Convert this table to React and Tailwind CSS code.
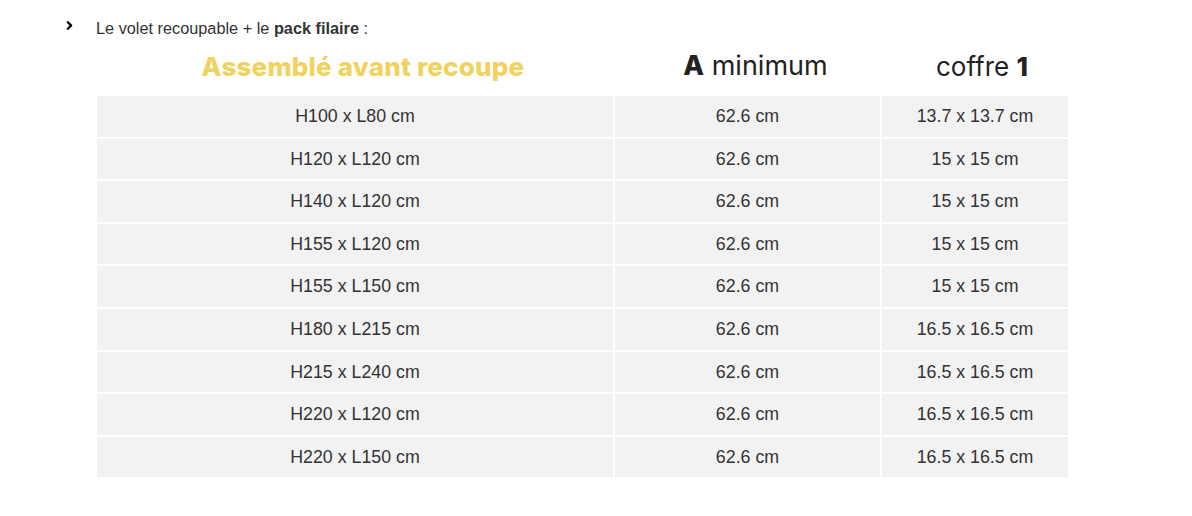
import { ChevronRight } from 'lucide-react';

const rows = [
  ['H100 x L80 cm', '62.6 cm', '13.7 x 13.7 cm'],
  ['H120 x L120 cm', '62.6 cm', '15 x 15 cm'],
  ['H140 x L120 cm', '62.6 cm', '15 x 15 cm'],
  ['H155 x L120 cm', '62.6 cm', '15 x 15 cm'],
  ['H155 x L150 cm', '62.6 cm', '15 x 15 cm'],
  ['H180 x L215 cm', '62.6 cm', '16.5 x 16.5 cm'],
  ['H215 x L240 cm', '62.6 cm', '16.5 x 16.5 cm'],
  ['H220 x L120 cm', '62.6 cm', '16.5 x 16.5 cm'],
  ['H220 x L150 cm', '62.6 cm', '16.5 x 16.5 cm'],
];

export default function App() {
  return (
    <div className="w-[1192px] h-[516px] bg-white text-[#333] font-['Liberation_Sans',Arial,sans-serif]">
      <div className="pt-[18px] pl-[63px] flex items-center gap-[20px] text-[16.3px] leading-[20px]">
        <ChevronRight className="w-[13px] h-[13px] text-[#000] -mt-[5px]" strokeWidth={4.5} />
        <span>
          Le volet recoupable + le <b className="font-bold">pack filaire</b> :
        </span>
      </div>

      <div className="pl-[97px]">
        <div className="grid grid-cols-[516px_265px_186px] gap-x-[2px] font-['Inter',sans-serif] text-[26px] h-[58px] items-center pb-[2px]">
          <div className="text-center pl-[16px] font-extrabold text-[#f0d35e] tracking-[0.2px]">Assemblé avant recoupe</div>
          <div className="text-center pl-[16px] text-[#222] text-[27px]">
            <span className="font-extrabold">A</span> minimum
          </div>
          <div className="text-center pl-[14px] text-[#222]">
            coffre <span className="font-extrabold">1</span>
          </div>
        </div>

        <div className="grid grid-cols-[516px_265px_186px] gap-x-[2px] gap-y-[2px] text-[17.8px] text-[#333]">
          {rows.map((r, i) =>
            r.map((c, j) => (
              <div key={i + '-' + j} className="h-[40.6px] bg-[#f2f2f2] flex items-center justify-center">
                {c}
              </div>
            ))
          )}
        </div>
      </div>
    </div>
  );
}
